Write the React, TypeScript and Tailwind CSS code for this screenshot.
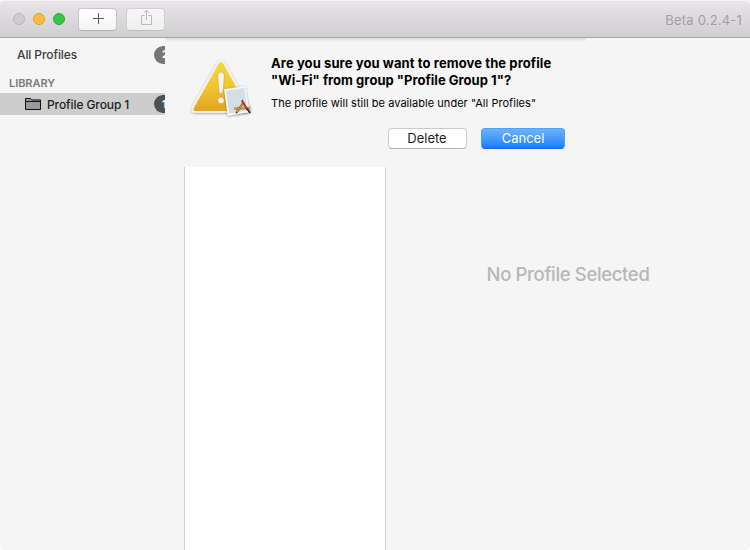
import React from "react";

function TitleBar() {
  return (
    <header className="box-border flex h-[38px] shrink-0 items-center rounded-t-[5px] border-t border-b border-t-[#f4f3f4] border-b-[#aaa9aa] bg-linear-to-b from-[#e7e5e7] to-[#d0ced0] pr-2 pl-[13px]">
      <div className="flex gap-2">
        <span className="size-3 rounded-full border border-[#b9b8b9] bg-[#cecdce]" />
        <span className="size-3 rounded-full border border-[#df9d34] bg-[#fdbc40]" />
        <span className="size-3 rounded-full border border-[#27aa35] bg-[#34c84a]" />
      </div>
      <button className="ml-[13px] flex h-[23px] w-[39px] items-center justify-center rounded-[4px] border border-[#c6c4c6] border-b-[#b2b0b2] bg-linear-to-b from-white to-[#f4f4f4] pb-px pl-px">
        <svg width="12" height="12" viewBox="0 0 12 12" stroke="#5a5a5a" strokeWidth="1">
          <path d="M6.5 0v11M1 5.5h11" />
        </svg>
      </button>
      <button className="ml-[9px] flex h-[23px] w-[39px] items-center justify-center rounded-[4px] border border-[#d0ced0] border-b-[#bfbdbf] bg-linear-to-b from-[#f8f7f8] to-[#f0eff0] pb-[3px] pl-px">
        <svg width="12" height="17" viewBox="0 0 12 17" fill="none" stroke="#b8b8b8" strokeWidth="1">
          <path d="M4.5 6.5h-3v9h10v-9h-3M6.5 11V1.2M3.8 3.9l2.7-2.7 2.7 2.7" />
        </svg>
      </button>
      <span className="mt-[3px] ml-auto text-[13px] tracking-[0.2px] text-[#a19fa1]">Beta 0.2.4-1</span>
    </header>
  );
}

function Sidebar() {
  return (
    <aside className="flex w-[165px] shrink-0 flex-col overflow-hidden pt-[5px] whitespace-nowrap">
      <div className="flex h-[23px] items-center pl-[17px] text-[12px] font-medium text-[#3c3c3c]">
        <span className="w-[137px] shrink-0 tracking-[-0.1px]">All Profiles</span>
        <span className="flex h-[18px] w-[26px] shrink-0 items-center rounded-full bg-[#777] pl-[8px] text-[11px] font-bold text-white">2</span>
      </div>
      <h2 className="mt-[10px] flex h-[15px] items-center pl-[9px] text-[11px] font-semibold tracking-[-0.05px] text-[#7c7c7c]">LIBRARY</h2>
      <div className="mt-[2px] flex h-[22px] items-center bg-[#cdcdcd] pl-[25px] text-[12px] font-medium text-[#1c1c1c]">
        <svg className="mr-[6px] shrink-0" width="16" height="12" viewBox="0 0 16 12" fill="#999" stroke="#111" strokeWidth="1">
          <path d="M.5 11.5V.5h5l1.2 1.4h8.8v9.6zM.5 3.5h15" />
        </svg>
        <span className="mt-px w-[107px] shrink-0 tracking-[-0.1px]">Profile Group 1</span>
        <span className="flex h-[18px] w-[26px] shrink-0 items-center rounded-full bg-[#505050] pl-[8px] text-[11px] font-bold text-white">1</span>
      </div>
    </aside>
  );
}

function WarningIcon() {
  return (
    <svg className="shrink-0" width="66" height="62" viewBox="0 0 66 62" fill="none">
      <defs>
        <linearGradient id="gold" x1="0" y1="0" x2="0" y2="1">
          <stop stopColor="#f8d735" />
          <stop offset=".55" stopColor="#efc42f" />
          <stop offset="1" stopColor="#dfa326" />
        </linearGradient>
        <filter id="drop" x="-20%" y="-20%" width="140%" height="150%">
          <feDropShadow dx="0" dy=".7" stdDeviation=".8" floodColor="#000" floodOpacity=".4" />
        </filter>
      </defs>
      <g filter="url(#drop)">
        <path d="M27.3 3.2Q31-1.6 34.7 3.2L60.3 48Q62.4 53.5 57 53.7H5Q-.4 53.5 1.7 48Z" fill="#f3f2ef" />
      </g>
      <path d="M28.9 4.4Q31 1.6 33.1 4.4L58.2 49Q59.5 51.9 56.5 52H5.5Q2.5 51.9 3.8 49Z" fill="url(#gold)" />
      <g fill="#f6f3e4" stroke="#bd9430" strokeWidth=".5">
        <path d="M27.6 16.5q0-3.4 3.4-3.4t3.4 3.4l-1.2 15.6q-.3 2.6-2.2 2.6t-2.2-2.6z" />
        <circle cx="31" cy="41.4" r="3.2" />
      </g>
      <g filter="url(#drop)">
        <path d="M34.2 30.2 55.5 27.2 59.3 53 37.7 56.8Z" fill="#f8f8f7" />
      </g>
      <path d="M36 31.7 54.4 29.1 57.5 51.4 39.1 54.7Z" fill="#d2dfe5" />
      <path d="m44 48.2 16-.8.7 3-16.7.5z" fill="#c39673" />
      <path d="m53.4 43.5-6.7 9.8" stroke="#65461c" strokeWidth="2.2" />
      <path d="m53.4 43.5-6.7 9.8" stroke="#e0a63c" strokeWidth="1.2" />
      <path d="m51.8 41.2 5.4 9.3" stroke="#b42c2a" strokeWidth="2" />
      <path d="m57 49.5 3.2 4.5" stroke="#353638" strokeWidth="2.1" />
      <path d="m46.8 53-1 1.4" stroke="#3d3b36" strokeWidth="1.2" />
    </svg>
  );
}

function ConfirmSheet() {
  return (
    <section className="flex h-[129px] w-[421px] bg-linear-to-b from-[#dddddd] via-[#f5f5f5] via-[4px] to-[#f5f5f5] pr-[21px] pl-[25px]">
      <div className="pt-[21px]">
        <WarningIcon />
      </div>
      <div className="flex grow flex-col pt-[17px] pl-[15px] whitespace-nowrap text-black">
        <h1 className="text-[13px] leading-[17px] font-bold">
          <span className="block tracking-[0.1px]">Are you sure you want to remove the profile</span>
          <span className="block tracking-[0.03px]">&quot;Wi-Fi&quot; from group &quot;Profile Group 1&quot;?</span>
        </h1>
        <p className="mt-[7px] text-[11px] leading-[15px] tracking-[0.04px]">The profile will still be available under &quot;All Profiles&quot;</p>
        <div className="mt-[17px] flex justify-end gap-[14px] text-[13px]">
          <button className="flex h-[21px] w-[79px] items-center justify-center rounded-[4px] border border-[#cbcbcb] border-b-[#b0b0b0] bg-white pr-px text-[#1c1c1c]">Delete</button>
          <button className="flex h-[21px] w-[84px] items-center justify-center rounded-[4px] border border-[#4ca1f8] border-b-[#1268ef] bg-linear-to-b from-[#6bb3fa] to-[#157efb] text-white">Cancel</button>
        </div>
      </div>
    </section>
  );
}

export default function App() {
  return (
    <div className="h-[550px] w-[750px] overflow-hidden bg-white font-[Inter,'Liberation_Sans',sans-serif]">
      <div className="flex h-full flex-col rounded-b-[5px] bg-[#f5f5f5]">
        <TitleBar />
        <div className="flex min-h-0 grow">
          <Sidebar />
          <main className="flex grow flex-col">
            <ConfirmSheet />
            <div className="flex min-h-0 grow pl-[19px]">
              <div className="w-[202px] border-x border-[#cfcfcf] bg-white" />
              <div className="flex grow justify-center pt-[94px] text-[18.5px] leading-[26px] font-[450] tracking-[-0.35px] text-[#b7b7b7]">No Profile Selected</div>
            </div>
          </main>
        </div>
      </div>
    </div>
  );
}
